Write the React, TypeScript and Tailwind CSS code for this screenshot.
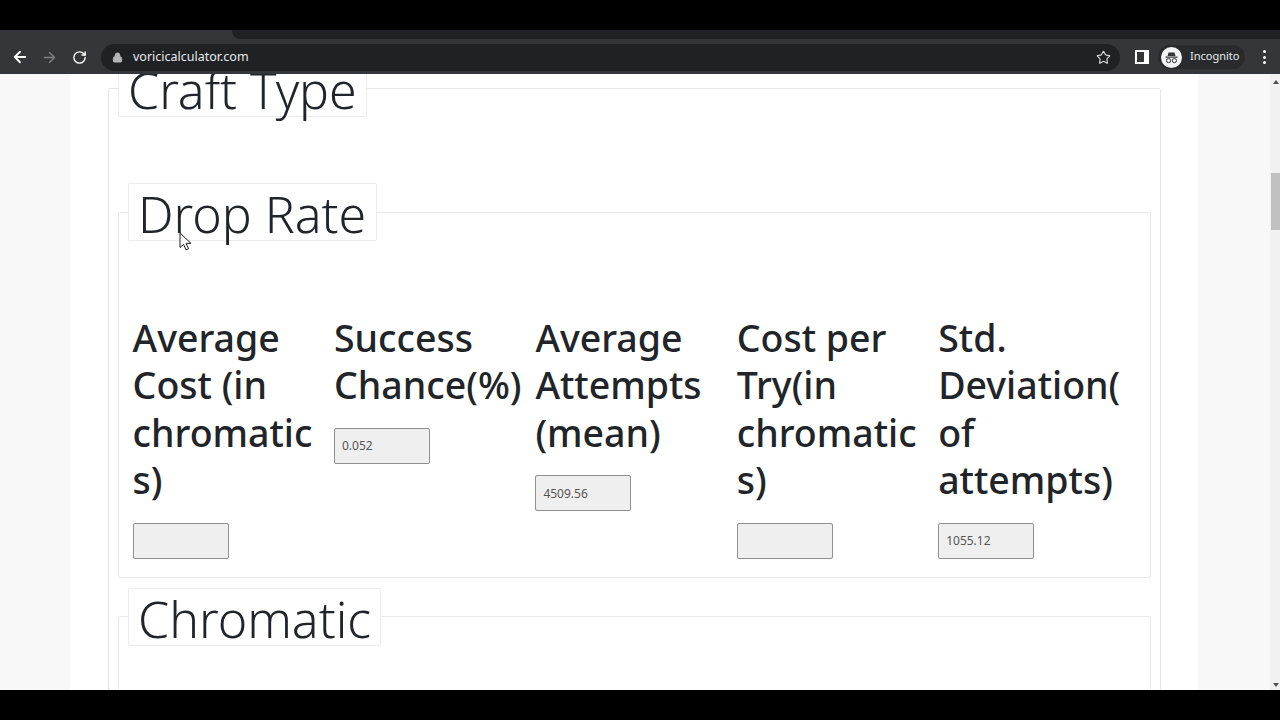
import { ArrowLeft, ArrowRight, RotateCw, Lock, Star } from 'lucide-react';

const columns = [
  { lines: ['Average', 'Cost (in', 'chromatic', 's)'], value: '' },
  { lines: ['Success', 'Chance(%)'], value: '0.052' },
  { lines: ['Average', 'Attempts', '(mean)'], value: '4509.56' },
  { lines: ['Cost per', 'Try(in', 'chromatic', 's)'], value: '' },
  { lines: ['Std.', 'Deviation(', 'of', 'attempts)'], value: '1055.12' },
];

function Legend({ title, className }: { title: string; className: string }) {
  return (
    <legend className={`h-[58px] ${className} whitespace-nowrap rounded-[2px] border border-[#ececec] bg-white px-[9px] text-[50px] font-light leading-[61px] text-[#212529]`}>
      {title}
    </legend>
  );
}

function Toolbar() {
  return (
    <div className="flex h-[34px] items-center bg-[#35363a] text-[#e8eaed]">
      <div className="flex w-[101px] items-center pl-[11px] pr-[12px]">
        <ArrowLeft size={18} strokeWidth={2.4} className="text-white" />
        <ArrowRight size={17} strokeWidth={2} className="ml-[12px] text-[#7f8083]" />
        <RotateCw size={15} strokeWidth={2.2} className="ml-[14px] text-white" />
      </div>
      <div className="flex h-[27px] w-[1019px] items-center rounded-full bg-[#202124] pl-[11px] pr-[9px]">
        <Lock size={11} fill="#b4b5b8" strokeWidth={2} className="text-[#b4b5b8]" />
        <span className="ml-[10px] flex-1 text-[12.5px] text-[#e8eaed]">voricicalculator.com</span>
        <Star size={15} strokeWidth={1.8} className="text-[#dadce0]" />
      </div>
      <div className="ml-[15px] h-[14px] w-[14px] border-[2px] border-white border-r-[5px] bg-[#35363a]" />
      <div className="ml-[9px] flex h-[24px] w-[87px] items-center rounded-full bg-[#292a2d] pl-[3px]">
        <svg width="21" height="21" viewBox="0 0 21 21">
          <circle cx="10.5" cy="10.5" r="10.5" fill="#f1f3f4" />
          <path d="M7.5 5.5h6l1 3.5h-8z" fill="#35363a" />
          <rect x="4.5" y="9.5" width="12" height="1.2" fill="#35363a" />
          <circle cx="7.6" cy="13.6" r="2.1" fill="none" stroke="#35363a" strokeWidth="1" />
          <circle cx="13.4" cy="13.6" r="2.1" fill="none" stroke="#35363a" strokeWidth="1" />
        </svg>
        <span className="ml-[8px] -translate-y-px text-[11px] text-[#e8eaed]">Incognito</span>
      </div>
      <div className="ml-[18px] flex flex-col gap-[2.5px]">
        <span className="h-[3px] w-[3px] rounded-full bg-white" />
        <span className="h-[3px] w-[3px] rounded-full bg-white" />
        <span className="h-[3px] w-[3px] rounded-full bg-white" />
      </div>
    </div>
  );
}

function Scrollbar() {
  return (
    <div className="relative w-[10px] bg-[#f1f1f1]">
      <div className="absolute left-[3px] top-[6px] h-0 w-0 border-x-[3px] border-b-[4px] border-x-transparent border-b-[#505050]" />
      <div className="absolute left-[1px] top-[99px] h-[57px] w-[9px] bg-[#c1c1c1]" />
      <div className="absolute bottom-[3px] left-[3px] h-0 w-0 border-x-[3px] border-t-[4px] border-x-transparent border-t-[#505050]" />
    </div>
  );
}

export default function App() {
  return (
    <div
      className="flex h-[720px] w-[1280px] flex-col overflow-hidden bg-black"
      style={{ fontFamily: '"Noto Sans", "Open Sans", sans-serif' }}
    >
      <div className="h-[30px] bg-black" />
      <div className="flex h-[10px] bg-[#35363a]">
        <div className="ml-[232px] h-[9px] flex-1 rounded-bl-[8px] bg-[#202124]" />
      </div>
      <Toolbar />

      <div className="flex h-[616px] overflow-hidden bg-white">
        <div className="w-[70px] bg-[#f8f8f8]" />
        <div className="relative w-[1128px] overflow-hidden bg-white pl-[38px] pr-[37px]">
          <fieldset className="-mt-[15px] rounded-[2px] border border-[#e6e6e6] px-[9px] pb-[20px]">
            <Legend title="Craft Type" className="w-[249px]" />
            <div className="h-[66px]" />

            <fieldset className="rounded-[2px] border border-[#e9e9e9]">
              <Legend title="Drop Rate" className="ml-[9px] w-[249px]" />
              <div className="grid grid-cols-[repeat(5,201.4px)] pb-[18px] pl-[13.6px] pt-[73px]">
                {columns.map((col) => (
                  <div key={col.lines.join(' ')} className="flex flex-col items-start gap-[19px]">
                    <h2 className="whitespace-nowrap text-[37.5px] font-medium leading-[47.4px] text-[#212529]">
                      {col.lines.map((line) => (
                        <div key={line}>{line}</div>
                      ))}
                    </h2>
                    <input
                      readOnly
                      value={col.value}
                      className="h-[36px] w-[96px] rounded-[2px] border border-[#8f8f8f] bg-[#efefef] pl-[7px] text-[12px] text-[#555555] outline-none"
                    />
                  </div>
                ))}
              </div>
            </fieldset>

            <fieldset className="mt-[10px] h-[200px] rounded-[2px] border border-[#e9e9e9]">
              <Legend title="Chromatic" className="ml-[9px] w-[253px]" />
            </fieldset>
          </fieldset>

          {/* mouse pointer */}
          <svg width="13" height="20" viewBox="0 0 13 20" className="absolute left-[109px] top-[158px]">
            <path d="M1 1v14.5l3.6-3.2 2.4 5.6 2.6-1.1-2.5-5.4h4.9z" fill="#fff" stroke="#222" strokeWidth="1" strokeLinejoin="round" />
          </svg>
        </div>
        <div className="w-[72px] bg-[#f8f8f8]" />
        <Scrollbar />
      </div>

      <div className="h-[30px] bg-black" />
    </div>
  );
}
